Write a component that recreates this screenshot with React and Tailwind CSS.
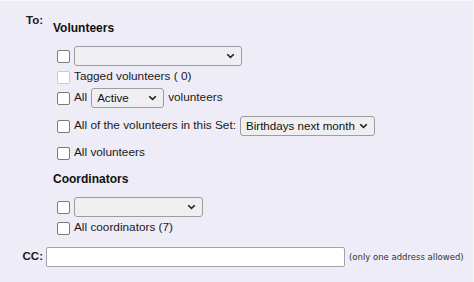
import React from 'react'

function Box({ disabled }) {
    return (
        <span
            className={
                'inline-block w-[13px] h-[13px] shrink-0 rounded-[2px] border bg-white ' +
                (disabled ? 'border-[#c9c9cf]' : 'border-[#7a7a7a]')
            }
        />
    )
}

function Chevron() {
    return (
        <svg width="9" height="6" viewBox="0 0 9 6" className="shrink-0">
            <path d="M1.2 1.2 L4.5 4.4 L7.8 1.2" fill="none" stroke="#222" strokeWidth="1.6" />
        </svg>
    )
}

function Select({ width, value }) {
    return (
        <div
            className={
                'h-[20px] flex items-center justify-between pl-[5px] pr-[6px] rounded-[3px] border border-[#9c9ca2] bg-[#efeff2] text-[11.6px] text-[#111] whitespace-nowrap ' +
                width
            }
        >
            <span>{value}</span>
            <Chevron />
        </div>
    )
}

export default function App() {
    return (
        <div
            className="w-[474px] h-[282px] bg-[#eeecf6] text-[11.8px] text-[#1a1a1a] border-t border-r border-[#f6f5fa] overflow-hidden"
            style={{ fontFamily: '"Liberation Sans", Arial, sans-serif' }}
        >
            <div className="flex">
                <div className="w-[43px] shrink-0 text-right pt-[12px] font-bold text-[11.5px] leading-[14px]">
                    To:
                </div>
                <div className="ml-[10px] flex flex-col">
                    <div className="mt-[20px] font-bold text-[12px] leading-[14px] text-[#111]">
                        Volunteers
                    </div>
                    <div className="ml-[4px] mt-[11px] h-[20px] flex items-center gap-[4px]">
                        <Box />
                        <Select width="w-[168px]" value="" />
                    </div>
                    <div className="ml-[4px] mt-[1px] h-[20px] flex items-center gap-[4px]">
                        <Box disabled />
                        <span>Tagged volunteers ( 0)</span>
                    </div>
                    <div className="ml-[4px] mt-[1px] h-[20px] flex items-center gap-[4px]">
                        <Box />
                        <span>All</span>
                        <Select width="w-[73px]" value="Active" />
                        <span>volunteers</span>
                    </div>
                    <div className="ml-[4px] mt-[8px] h-[20px] flex items-center gap-[4px]">
                        <Box />
                        <span>All of the volunteers in this Set:</span>
                        <Select width="w-[135px]" value="Birthdays next month" />
                    </div>
                    <div className="ml-[4px] mt-[7px] h-[20px] flex items-center gap-[4px]">
                        <Box />
                        <span>All volunteers</span>
                    </div>
                    <div className="mt-[9px] font-bold text-[12px] leading-[14px] text-[#111]">
                        Coordinators
                    </div>
                    <div className="ml-[4px] mt-[11px] h-[20px] flex items-center gap-[4px]">
                        <Box />
                        <Select width="w-[129px]" value="" />
                    </div>
                    <div className="ml-[4px] mt-[1px] h-[20px] flex items-center gap-[4px]">
                        <Box />
                        <span>All coordinators (7)</span>
                    </div>
                </div>
            </div>
            <div className="mt-[9px] h-[20px] flex items-center">
                <div className="w-[43px] shrink-0 text-right font-bold text-[11.5px]">CC:</div>
                <input
                    type="text"
                    className="ml-[3px] w-[299px] h-[20px] bg-white border border-[#a2a2a8] rounded-[2px] outline-none"
                />
                <span
                    className="ml-[4px] text-[8.5px] text-[#333]"
                    style={{ fontFamily: '"DejaVu Sans", Verdana, sans-serif' }}
                >
                    (only one address allowed)
                </span>
            </div>
        </div>
    )
}
